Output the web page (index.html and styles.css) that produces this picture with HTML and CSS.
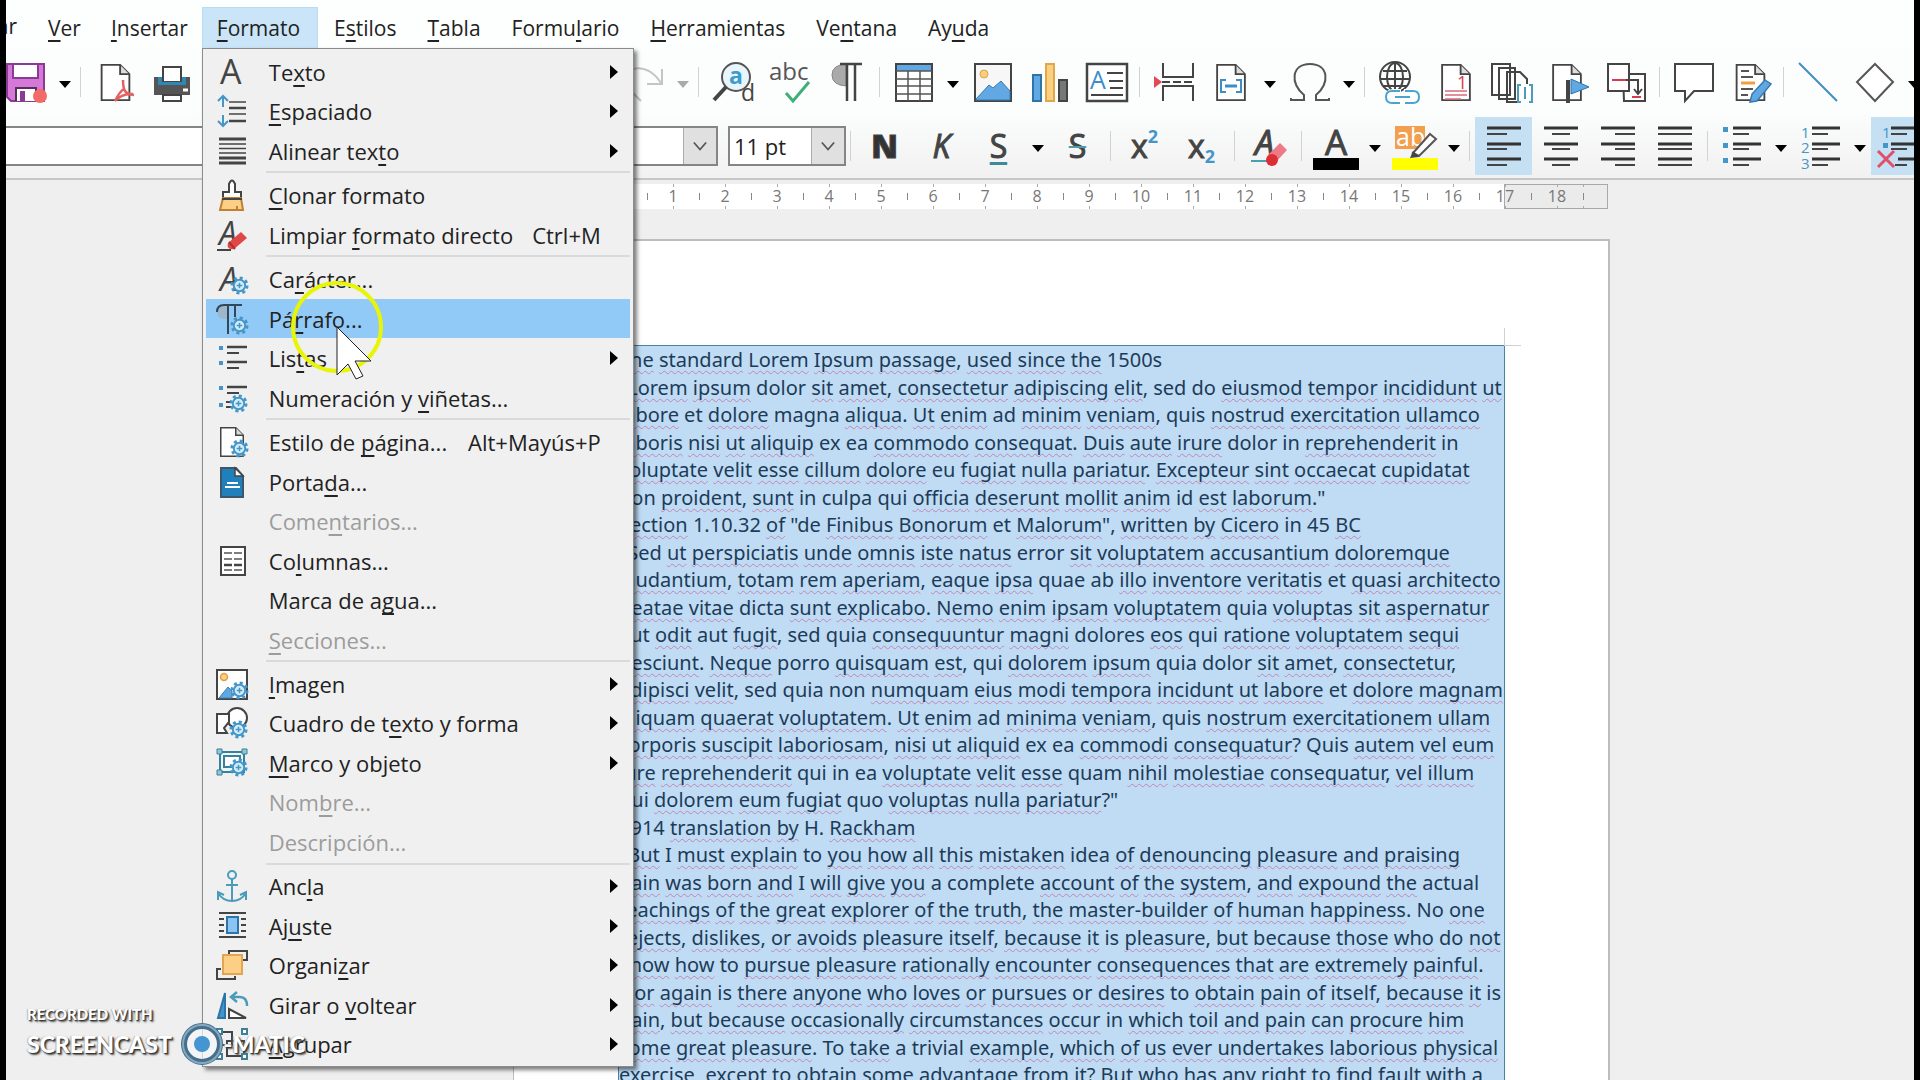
FILE: index.html
```html
<!DOCTYPE html>
<html lang="es">
<head>
<meta charset="utf-8">
<title>Writer - Formato</title>
<link rel="stylesheet" href="styles.css">
</head>
<body>
<svg class="sprite" aria-hidden="true">
  <symbol id="gear" viewBox="0 0 20 20">
    <circle cx="10" cy="10" r="8" fill="none" stroke="#4596c8" stroke-width="3" stroke-dasharray="3.2 3.08"/>
    <circle cx="10" cy="10" r="6" fill="#d5edf7" stroke="#4596c8" stroke-width="2"/>
    <path d="M10 7v6M7 10h6" stroke="#4596c8" stroke-width="1.6"/>
  </symbol>
  <symbol id="page" viewBox="0 0 32 40">
    <path d="M1 1h20l10 10v28H1z" fill="#fff" stroke="#444" stroke-width="2"/>
    <path d="M21 1v10h10" fill="#ddd" stroke="#444" stroke-width="2"/>
  </symbol>
</svg>

<div class="app">
  <nav class="menubar">
    <button class="top first">Editar</button>
    <button class="top"><u>V</u>er</button>
    <button class="top"><u>I</u>nsertar</button>
    <div class="holder">
      <button class="top open"><u>F</u>ormato</button>
      <div class="menu" role="menu">
        <button class="item"><svg viewBox="0 0 32 32"><text x="4" y="28" class="glyph" font-size="34">A</text></svg><span>Te<u>x</u>to</span><i></i></button>
        <button class="item"><svg viewBox="0 0 32 32" fill="none"><path d="M7 12V2M2 6l5-5 5 5M7 20v10M2 26l5 5 5-5" stroke="#4596c8" stroke-width="2"/><path d="M13 7h17M13 19h17" stroke="#444" stroke-width="1.5"/><path d="M13 13h17M13 26h17" stroke="#444" stroke-width="2.6"/></svg><span><u>E</u>spaciado</span><i></i></button>
        <button class="item"><svg viewBox="0 0 32 32" fill="none" stroke="#444"><path d="M3 4h27M3 23h27M3 28h27" stroke-width="3"/><path d="M3 9h27M3 13.500h27M3 18h27" stroke-width="1.500"/></svg><span>Alinear tex<u>t</u>o</span><i></i></button>
        <hr>
        <button class="item"><svg viewBox="0 0 32 32" stroke="#444" stroke-width="2"><path d="M13 13V5q3-7 6 0v8h6v6H7v-6z" fill="#fff"/><path d="M7 19h18l2 12H4z" fill="#fbcf85" stroke="#c08030"/><path d="M6 20h20"/><path d="M21 27v4" stroke="#c08030"/></svg><span><u>C</u>lonar formato</span></button>
        <button class="item"><svg viewBox="0 0 32 32"><text x="3" y="26" class="glyph" font-style="italic" font-size="32">A</text><path d="M1 31h14" stroke="#444" stroke-width="2"/><path d="M12 24l13-11 6 6-13 11q-8 1-6-6z" fill="#e04848"/><path d="M13 23l6 7" stroke="#b02f2f" stroke-width="2"/></svg><span>Limpiar <u>f</u>ormato directo</span><kbd>Ctrl+M</kbd></button>
        <hr>
        <button class="item"><svg viewBox="0 0 32 32"><text x="4" y="28" class="glyph" font-style="italic" font-size="32">A</text><use href="#gear" x="14" y="13" width="19" height="19"/></svg><span>Ca<u>r</u>ácter...</span></button>
        <button class="item hover"><svg viewBox="0 0 32 32"><path d="M12 2v14H8Q1 15 1 9t7-7z" fill="#9db7cc"/><path d="M1 9q0-7 7-7h18M12 2v29M19 2v12" fill="none" stroke="#33475a" stroke-width="2"/><use href="#gear" x="14" y="13" width="19" height="19"/></svg><span>Pá<u>r</u>rafo...</span></button>
        <button class="item"><svg viewBox="0 0 32 32"><path d="M3 4h4v4H3zM3 19h4v4H3z" fill="#4596c8"/><path d="M11 5h20M11 20h20" stroke="#444" stroke-width="2.500"/><path d="M11 11h12M11 26h12" stroke="#444" stroke-width="2"/></svg><span>Lis<u>t</u>as</span><i></i></button>
        <button class="item"><svg viewBox="0 0 32 32"><path d="M3 4h4v4H3zM3 21h4v4H3z" fill="#4596c8"/><path d="M11 5h20" stroke="#444" stroke-width="2.500"/><path d="M11 11h12M10 20h6M10 25h6" stroke="#444" stroke-width="2"/><use href="#gear" x="13" y="12" width="19" height="19"/></svg><span>Numeración y <u>v</u>iñetas...</span></button>
        <hr>
        <button class="item"><svg viewBox="0 0 32 32"><use href="#page" x="4" y="1" width="24" height="30"/><use href="#gear" x="14" y="13" width="19" height="19"/></svg><span>Estilo de <u>p</u>ágina...</span><kbd>Alt+Mayús+P</kbd></button>
        <button class="item"><svg viewBox="0 0 32 32"><path d="M5 2h15l7 8v21H5z" fill="#2080bb" stroke="#3c566a" stroke-width="2"/><path d="M19 2v8h8z" fill="#fff" stroke="#444" stroke-width="1.500"/><path d="M11 17h11M9 21h15" stroke="#fff" stroke-width="2"/></svg><span>Porta<u>d</u>a...</span></button>
        <button class="item" disabled><svg viewBox="0 0 32 32"></svg><span>Come<u>n</u>tarios...</span></button>
        <button class="item"><svg viewBox="0 0 32 32"><path d="M5 2h24v28H5z" fill="#fff" stroke="#444" stroke-width="2"/><path d="M8 8h8M18 8h8M8 14h8M18 14h8M8 25h8M18 25h8" stroke="#555" stroke-width="1.500"/><path d="M8 20h8M18 20h8" stroke="#444" stroke-width="2.500"/></svg><span>Co<u>l</u>umnas...</span></button>
        <button class="item"><svg viewBox="0 0 32 32"></svg><span>Marca de a<u>g</u>ua...</span></button>
        <button class="item" disabled><svg viewBox="0 0 32 32"></svg><span><u>S</u>ecciones...</span></button>
        <hr>
        <button class="item"><svg viewBox="0 0 32 32"><path d="M1 2h30v29H1z" fill="#fff" stroke="#444" stroke-width="2"/><circle cx="8" cy="9" r="3.500" fill="#fbcf85" stroke="#e0a040" stroke-width="1.500"/><path d="M3 30l9-11 4 4v7z" fill="#5fa8df" stroke="#3b80b8"/><use href="#gear" x="14" y="13" width="19" height="19"/></svg><span><u>I</u>magen</span><i></i></button>
        <button class="item"><svg viewBox="0 0 32 32" fill="#fff" stroke="#444" stroke-width="2"><circle cx="21" cy="11" r="10"/><path d="M1 7h12v8l-5 6 3 5H1z"/><use href="#gear" x="13" y="13" width="19" height="19"/></svg><span>Cuadro de t<u>e</u>xto y forma</span><i></i></button>
        <button class="item"><svg viewBox="0 0 32 32" fill="#e9f6fa" stroke="#3c7f98" stroke-width="2"><path d="M4 5h24v20H4z"/><path d="M8 9h16v11H8z" fill="#fff"/><path d="M1 2h5v5H1zM26 2h5v5h-5zM1 23h5v5H1z" fill="#8dc8dc" stroke-width="1"/><use href="#gear" x="13" y="11" width="19" height="19"/></svg><span><u>M</u>arco y objeto</span><i></i></button>
        <button class="item" disabled><svg viewBox="0 0 32 32"></svg><span>Nom<u>b</u>re...</span></button>
        <button class="item" disabled><svg viewBox="0 0 32 32"></svg><span>Descripción...</span></button>
        <hr>
        <button class="item"><svg viewBox="0 0 32 32" fill="none" stroke="#4a9cb8" stroke-width="2"><circle cx="16" cy="5" r="4"/><path d="M16 9v22M10 15h12M2 30v-8l6 3M2 23q5 8 14 8t14-8M30 30v-8l-6 3"/></svg><span>Anc<u>l</u>a</span><i></i></button>
        <button class="item"><svg viewBox="0 0 32 32" stroke="#444" stroke-width="2"><path d="M3 3h27M3 27h27"/><path d="M3 9h5M3 15h5M3 21h5M25 9h5M25 15h5M25 21h5"/><path d="M11 7h11v16H11z" fill="#8cc4f4" stroke="#2d74a8"/></svg><span>Aj<u>u</u>ste</span><i></i></button>
        <button class="item"><svg viewBox="0 0 32 32"><path d="M13 5V2h18v9h-5M5 20H1v10h18v-3" fill="none" stroke="#444" stroke-width="2"/><path d="M7 6h19v19H7z" fill="#fbcf85" stroke="#e3a650" stroke-width="2"/></svg><span>Organi<u>z</u>ar</span><i></i></button>
        <button class="item"><svg viewBox="0 0 32 32"><path d="M9 4v25H2z" fill="#4596c8" stroke="#2d74a8" stroke-width="2"/><path d="M13 20v9h17z" fill="#fff" stroke="#444" stroke-width="2"/><path d="M21 3l-6 5 6 5M15 8h9q7 0 7 9" fill="none" stroke="#4a9cb8" stroke-width="2.500"/></svg><span>Girar o <u>v</u>oltear</span><i></i></button>
        <button class="item"><svg viewBox="0 0 32 32" fill="none" stroke="#444" stroke-width="2"><path d="M4 4h12v13H4zM11 13h17v15H11z"/><path d="M1 1h5v5H1zM26 1h5v5h-5zM26 26h5v5h-5zM1 26h5v5H1z" fill="#fff" stroke="#3c7f98"/></svg><span><u>A</u>grupar</span><i></i></button>
      </div>
    </div>
    <button class="top">E<u>s</u>tilos</button>
    <button class="top"><u>T</u>abla</button>
    <button class="top">Formu<u>l</u>ario</button>
    <button class="top"><u>H</u>erramientas</button>
    <button class="top">Ve<u>n</u>tana</button>
    <button class="top">Ay<u>u</u>da</button>
  </nav>

  <div class="toolbar standard">
    <div class="group left">
      <button class="tool" aria-label="Guardar"><svg viewBox="0 0 40 40"><path d="M1 2h37v37H5l-4-4z" fill="#d678d8" stroke="#8a3c94" stroke-width="2"/><path d="M7 2h25v14H7z" fill="#fff" stroke="#8a3c94" stroke-width="2"/><path d="M10 39V26h20v13" fill="#fff" stroke="#55305c" stroke-width="2"/><path d="M14 29h5v10h-5z" fill="#8a3c94"/><circle cx="34" cy="34" r="7" fill="#f26b66"/></svg></button>
      <button class="drop" aria-label="Más"></button><b class="sep"></b>
      <button class="tool" aria-label="PDF"><svg viewBox="0 0 40 40"><use href="#page" x="5" y="2" width="31" height="37"/><path d="M28 18c0 12 3 14 11 15M29 27c-4 2-6 6-9 12q7-8 18-7" fill="none" stroke="#e3625f" stroke-width="2.500"/></svg></button>
      <button class="tool" aria-label="Imprimir"><svg viewBox="0 0 40 40"><path d="M11 5h18v15H11z" fill="#fff" stroke="#444" stroke-width="2"/><path d="M2 15h8v8h20v-8h8v18H2z" fill="#555"/><path d="M6 15h4v5h20v-5h4v8H6z" fill="#2f87b4"/><path d="M11 33h18v6H11z" fill="#fff" stroke="#444" stroke-width="2"/><path d="M31 28h5" stroke="#fff" stroke-width="3"/></svg></button>
    </div>
    <div class="group">
      <button class="tool" aria-label="Rehacer"><svg viewBox="0 0 40 40" fill="none" stroke="#c4c4c4" stroke-width="2"><path d="M17 39L2 24C-2 4 22-2 37 21M38 7v15H23"/></svg></button>
      <button class="drop dim" aria-label="Más"></button><b class="sep"></b>
      <button class="tool" aria-label="Buscar"><svg viewBox="0 0 40 40"><circle cx="23" cy="15" r="14" fill="#e8f5fb" stroke="#555" stroke-width="2"/><path d="M13 25L1 38" stroke="#444" stroke-width="4"/><text x="16" y="22" font-size="23" font-weight="700" fill="#3c9ccf">a</text><text x="28" y="39" font-size="23" fill="#444">d</text></svg></button>
      <button class="tool" aria-label="Ortografía"><svg viewBox="0 0 40 40"><text x="-1" y="18" font-size="24" fill="#555">abc</text><path d="M16 31l7 8 16-19" fill="none" stroke="#3fae78" stroke-width="3"/></svg></button>
      <button class="tool" aria-label="Marcas"><svg viewBox="0 0 40 40"><path d="M19 2v22Q5 23 5 13T19 2z" fill="#aaa" stroke="#888"/><path d="M13 2h22M20 2v37M28 2v37" stroke="#444" stroke-width="2.500"/></svg></button>
      <b class="sep"></b>
      <button class="tool" aria-label="Tabla"><svg viewBox="0 0 40 40"><path d="M2 2h36v37H2z" fill="#fff" stroke="#444" stroke-width="2"/><path d="M3 3h34v6H3z" fill="#5fa8e4"/><path d="M2 9h36M2 17h36M2 24h36M2 32h36M14 9v30M26 9v30" stroke="#555" stroke-width="1.500"/></svg></button>
      <button class="drop" aria-label="Más"></button>
      <button class="tool" aria-label="Imagen"><svg viewBox="0 0 40 40"><path d="M2 2h36v37H2z" fill="#f7f7f7" stroke="#444" stroke-width="2"/><circle cx="11" cy="12" r="4" fill="#fbcf85" stroke="#e0a040"/><path d="M3 37l13-14 4 3 8-7 9 10v9H3z" fill="#62a8e2" stroke="#347db4"/></svg></button>
      <button class="tool" aria-label="Gráfico"><svg viewBox="0 0 40 40" stroke-width="2"><path d="M3 13h8v26H3z" fill="#62a8e2" stroke="#2d74a8"/><path d="M16 2h8v37h-8z" fill="#fbd080" stroke="#dfa84c"/><path d="M29 18h8v21h-8z" fill="#777" stroke="#444"/></svg></button>
      <button class="tool" aria-label="Cuadro de texto"><svg viewBox="0 0 40 40"><path d="M0 2h40v37H0z" fill="#fff" stroke="#444" stroke-width="2.500"/><text x="3" y="27" font-size="25" fill="#3c8dc8">A</text><path d="M20 11h16M22 19h14M23 26h13M4 33h32" stroke="#444" stroke-width="2"/></svg></button>
      <b class="sep"></b>
      <button class="tool" aria-label="Salto"><svg viewBox="0 0 40 40" fill="none" stroke="#444" stroke-width="2"><path d="M9 1v14h30V1M9 39V24h30v15"/><path d="M8 20h32" stroke-dasharray="8 3"/><path d="M0 14l8 6-8 6z" fill="#e14a55" stroke="none"/></svg></button>
      <button class="tool" aria-label="Campo"><svg viewBox="0 0 40 40"><use href="#page" x="5" y="2" width="30" height="37"/><path d="M15 18h-5v12h5M25 18h5v12h-5" fill="none" stroke="#3c8dc8" stroke-width="2"/><path d="M14 24h12" stroke="#3c8dc8" stroke-width="3"/></svg></button>
      <button class="drop" aria-label="Más"></button>
      <button class="tool" aria-label="Carácter especial"><svg viewBox="0 0 40 40" fill="none" stroke="#555" stroke-width="2"><path d="M1 36v2h13v-5C0 22 1 2 20 2s20 20 6 31v5h13v-2"/></svg></button>
      <button class="drop" aria-label="Más"></button><b class="sep"></b>
      <button class="tool" aria-label="Hiperenlace"><svg viewBox="0 0 40 40" fill="none" stroke="#444" stroke-width="2"><circle cx="16" cy="15" r="15"/><ellipse cx="16" cy="15" rx="8" ry="14"/><path d="M1 17h30M4 9h24M4 24h24M16 1v28"/><path d="M22 29h-8q-6 0-6 6t6 6h8M25 29h8q6 0 6 6t-6 6h-8M16 35h15" stroke="#fff" stroke-width="4"/><path d="M21 29h-8q-6 0-6 6t6 6h8M26 29h8q6 0 6 6t-6 6h-8M16 35h15" stroke="#49a5cf"/></svg></button>
      <button class="tool" aria-label="Nota al pie"><svg viewBox="0 0 40 40"><use href="#page" x="5" y="2" width="30" height="37"/><text x="21" y="27" font-size="18" fill="#d33c4e">1</text><path d="M9 29h22M9 33h22M9 37h16" stroke="#d66c78" stroke-width="1.500"/></svg></button>
      <button class="tool" aria-label="Nota final"><svg viewBox="0 0 40 40" fill="#fff" stroke="#444" stroke-width="2"><path d="M-1 2h18v31H-1zM6 6h16v31H6zM14 10h13l7 7v23H14z"/><path d="M24 22h16v19H24z" stroke="none"/><path d="M28 23h-3v17h3M36 23h3v17h-3M32 25v12" stroke="#4a9cb8"/></svg></button>
      <button class="tool" aria-label="Marcador"><svg viewBox="0 0 40 40"><use href="#page" x="2" y="2" width="30" height="37"/><path d="M18 18v23" stroke="#444" stroke-width="4"/><path d="M21 17l18 8-18 7z" fill="#5fa8e4" stroke="#2d74a8"/></svg></button>
      <button class="tool" aria-label="Referencia"><svg viewBox="0 0 40 40" fill="#fff" stroke="#444" stroke-width="2"><path d="M16 12h22v27H17z"/><path d="M1 2h21v27H1z"/><path d="M19 18h12v13M27 27l4 5 4-5" fill="none"/><path d="M5 18h14M25 35h9" stroke="#d33c4e"/></svg></button>
      <b class="sep"></b>
      <button class="tool" aria-label="Comentario"><svg viewBox="0 0 40 40" fill="#fff" stroke="#444" stroke-width="2"><path d="M1 2h38v27H20l-9 10V29H1z"/></svg></button>
      <button class="tool" aria-label="Cambios"><svg viewBox="0 0 40 40"><use href="#page" x="4" y="2" width="31" height="37"/><path d="M10 9h8M10 15h12M10 27h12M10 33h7" stroke="#555" stroke-width="2"/><path d="M10 21h14" stroke="#f0a040" stroke-width="3"/><path d="M34 18l6 4-14 17-7 1 2-8z" fill="#5fa8e4" stroke="#3a78b0" stroke-width="1.500"/></svg></button>
      <b class="sep"></b>
      <button class="tool" aria-label="Línea"><svg viewBox="0 0 40 40"><path d="M1 1l38 38" stroke="#3c8dc0" stroke-width="2"/></svg></button>
      <button class="tool" aria-label="Formas"><svg viewBox="0 0 40 40"><path d="M20 2l18 18-18 19L2 20z" fill="#fff" stroke="#555" stroke-width="2"/></svg></button>
      <button class="drop" aria-label="Más"></button>
    </div>
  </div>

  <div class="toolbar format">
    <div class="combo style"><input aria-label="Estilo de párrafo"></div>
    <div class="combo font"><select aria-label="Fuente"><option></option></select><svg viewBox="0 0 16 16"><path d="M1 4l7 8 7-8"/></svg></div>
    <div class="combo size"><select aria-label="Tamaño"><option>11 pt</option></select><svg viewBox="0 0 16 16"><path d="M1 4l7 8 7-8"/></svg></div>
    <b class="sep"></b>
    <button class="tool letter bold">N</button>
    <button class="tool letter ital">K</button>
    <button class="tool letter under">S</button>
    <button class="drop" aria-label="Más"></button>
    <button class="tool letter strike">S</button>
    <b class="sep"></b>
    <button class="tool letter">x<sup>2</sup></button>
    <button class="tool letter">x<sub>2</sub></button>
    <b class="sep"></b>
    <button class="tool" aria-label="Limpiar"><svg viewBox="0 0 40 40"><text x="6" y="29" class="glyph" font-style="italic" font-size="34">A</text><path d="M2 35h16" stroke="#49a0b0" stroke-width="2"/><path d="M19 29l12-12 7 7-11 12z" fill="#ee7a86"/><circle cx="23" cy="34" r="6" fill="#dc2f35"/></svg></button>
    <b class="sep"></b>
    <button class="tool" aria-label="Color de letra"><svg class="wide" viewBox="0 0 46 46"><text x="12" y="32" class="glyph" font-size="35">A</text><path d="M0 35h46v12H0z"/></svg></button>
    <button class="drop" aria-label="Más"></button>
    <button class="tool" aria-label="Color de resalte"><svg class="wide" viewBox="0 0 46 46"><path d="M3 3h30v23H3z" fill="#f3a04e"/><text x="4" y="23" font-size="25" fill="#fff">ab</text><path d="M0 35h46v12H0z" fill="#ff0"/><path d="M38 11l6 5-17 17-6-3z" fill="#fff" stroke="#555" stroke-width="2"/><path d="M21 28l6 6-9 1z" fill="#444"/></svg></button>
    <button class="drop" aria-label="Más"></button>
    <b class="sep"></b>
    <button class="tool on" aria-label="Izquierda"><svg viewBox="0 0 40 40"><path class="k" d="M3 2h34M3 18h34M3 33h34"/><path class="n" d="M3 8h20M3 23h20M3 39h20"/></svg></button>
    <button class="tool" aria-label="Centro"><svg viewBox="0 0 40 40"><path class="k" d="M3 2h34M3 18h34M3 33h34"/><path class="n" d="M11 8h18M11 23h18M11 39h18"/></svg></button>
    <button class="tool" aria-label="Derecha"><svg viewBox="0 0 40 40"><path class="k" d="M3 2h34M3 18h34M3 33h34"/><path class="n" d="M17 8h20M17 23h20M17 39h20"/></svg></button>
    <button class="tool" aria-label="Justificado"><svg viewBox="0 0 40 40"><path class="k" d="M3 2h34M3 18h34M3 33h34"/><path class="n" d="M3 8h34M3 23h34M3 39h34"/></svg></button>
    <b class="sep"></b>
    <button class="tool" aria-label="Viñetas"><svg viewBox="0 0 40 40"><path d="M1 1h5v5H1zM1 17h5v5H1zM1 32h5v5H1z" fill="#4596c8"/><path class="k" d="M11 2h28M11 18h28M11 33h28"/><path class="n" d="M11 8h16M11 23h16M11 39h16"/></svg></button>
    <button class="drop" aria-label="Más"></button>
    <button class="tool" aria-label="Numeración"><svg viewBox="0 0 40 40"><g font-size="15" fill="#4596c8"><text x="0" y="12">1</text><text x="0" y="27">2</text><text x="0" y="43">3</text></g><path class="k" d="M11 2h28M11 18h28M11 33h28"/><path class="n" d="M11 8h16M11 23h16M11 39h16"/></svg></button>
    <button class="drop" aria-label="Más"></button>
    <button class="tool on" aria-label="Sin lista"><svg viewBox="0 0 40 40"><text x="2" y="12" font-size="15" fill="#4596c8">1</text><path d="M3 17h5v5H3z" fill="#4596c8"/><path class="k" d="M11 2h28M11 18h28M18 33h21"/><path class="n" d="M11 8h16M11 23h16M15 39h12"/><path d="M-2 25l16 16M14 25L-2 41" stroke="#e0506a" stroke-width="3"/></svg></button>
  </div>

  <main class="workspace">
    <div class="ruler">
      <span>1</span><span>2</span><span>3</span><span>4</span><span>5</span><span>6</span><span>7</span><span>8</span><span>9</span><span>10</span><span>11</span><span>12</span><span>13</span><span>14</span><span>15</span><span>16</span><span>17</span><span>18</span><span class="tail"></span>
    </div>
    <article class="page">
      <div class="selection">
        <p><span>The standard Lorem Ipsum passage, used since the 1500s</span></p>
        <p><span>"Lorem ipsum dolor sit amet, consectetur adipiscing elit, sed do eiusmod tempor incididunt ut</span><span>labore et dolore magna aliqua. Ut enim ad minim veniam, quis nostrud exercitation ullamco</span><span>laboris nisi ut aliquip ex ea commodo consequat. Duis aute irure dolor in reprehenderit in</span><span>voluptate velit esse cillum dolore eu fugiat nulla pariatur. Excepteur sint occaecat cupidatat</span><span>non proident, sunt in culpa qui officia deserunt mollit anim id est laborum."</span></p>
        <p><span>Section 1.10.32 of "de Finibus Bonorum et Malorum", written by Cicero in 45 BC</span></p>
        <p><span>"Sed ut perspiciatis unde omnis iste natus error sit voluptatem accusantium doloremque</span><span>laudantium, totam rem aperiam, eaque ipsa quae ab illo inventore veritatis et quasi architecto</span><span>beatae vitae dicta sunt explicabo. Nemo enim ipsam voluptatem quia voluptas sit aspernatur</span><span>aut odit aut fugit, sed quia consequuntur magni dolores eos qui ratione voluptatem sequi</span><span>nesciunt. Neque porro quisquam est, qui dolorem ipsum quia dolor sit amet, consectetur,</span><span>adipisci velit, sed quia non numquam eius modi tempora incidunt ut labore et dolore magnam</span><span>aliquam quaerat voluptatem. Ut enim ad minima veniam, quis nostrum exercitationem ullam</span><span>corporis suscipit laboriosam, nisi ut aliquid ex ea commodi consequatur? Quis autem vel eum</span><span>iure reprehenderit qui in ea voluptate velit esse quam nihil molestiae consequatur, vel illum</span><span>qui dolorem eum fugiat quo voluptas nulla pariatur?"</span></p>
        <p><span>1914 translation by H. Rackham</span></p>
        <p><span>"But I must explain to you how all this mistaken idea of denouncing pleasure and praising</span><span>pain was born and I will give you a complete account of the system, and expound the actual</span><span>teachings of the great explorer of the truth, the master-builder of human happiness. No one</span><span>rejects, dislikes, or avoids pleasure itself, because it is pleasure, but because those who do not</span><span>know how to pursue pleasure rationally encounter consequences that are extremely painful.</span><span>Nor again is there anyone who loves or pursues or desires to obtain pain of itself, because it is</span><span>pain, but because occasionally circumstances occur in which toil and pain can procure him</span><span>some great pleasure. To take a trivial example, which of us ever undertakes laborious physical</span><span>exercise, except to obtain some advantage from it? But who has any right to find fault with a</span></p>
      </div>
    </article>
  </main>
</div>

<svg class="pointer" viewBox="0 0 96 100" aria-hidden="true">
  <circle cx="48" cy="48" r="44" fill="none" stroke="#e8f508" stroke-width="4"/>
  <path d="M48 48v48l11-11 8 15 7-3-8-15h16z" fill="#fff" stroke="#222" stroke-width="1"/>
</svg>
<div class="watermark">
  <small>RECORDED WITH</small>
  <div>SCREENCAST<svg viewBox="0 0 44 44"><circle cx="22" cy="22" r="18" fill="#f3f6f8" fill-opacity=".7" stroke="#456f8c" stroke-width="6"/><circle cx="22" cy="22" r="19" fill="none" stroke="#86a9bf" stroke-width="2"/><circle cx="22" cy="22" r="8" fill="#4596d0"/></svg>-MATIC</div>
</div>
<script src="script.js"></script>
</body>
</html>
```
FILE: styles.css
```css
* { box-sizing: border-box; }
body {
  margin: 0;
  padding: 0 6px;
  background: #000;
  color: #222;
  font-family: "Open Sans", "Noto Sans", sans-serif;
  font-size: 22px;
  height: 100vh;
  overflow: hidden;
}
button, input, select { font: inherit; color: inherit; border: 0; padding: 0; margin: 0; background: none; }
svg { display: block; overflow: visible; }
.sprite { position: absolute; width: 0; height: 0; }
.glyph { fill: #444; stroke: #444; stroke-width: 1px; font-family: "Open Sans", sans-serif; }

.app { display: flex; flex-direction: column; height: 100vh; background: #efefef; overflow: hidden; }

.menubar { display: flex; align-items: flex-end; height: 49px; background: #fdfefe; padding-bottom: 1px; }
.top { height: 41px; padding: 0 14px 0 16px; white-space: nowrap; font-size: 21px; line-height: 38px; }
.holder ~ .top { padding-right: 15px; }
.top.first { width: 26px; padding: 0 15px 0 0; display: flex; justify-content: flex-end; }
.top u, .item u { text-decoration-thickness: 2px; text-underline-offset: 4px; text-decoration-skip-ink: none; }
.top.open { padding: 0 17px 0 14px; background: #cae5f7; border: 1px solid #b8dcf3; border-bottom: 0; }
.holder { position: relative; }

.menu {
  position: absolute; left: 0; top: 41px; z-index: 2;
  width: 432px; min-height: 1019px;
  display: flex; flex-direction: column;
  padding: 3px 3px 2px;
  background: #f0f0f0; border: 1px solid #8c8c8c;
  box-shadow: 3px 3px 4px rgba(0, 0, 0, .5);
}
.item { flex: 1 0 39px; display: flex; align-items: center; padding: 0 12px 0 10px; text-align: left; white-space: nowrap; }
.item svg { width: 32px; height: 32px; margin-right: 21px; flex: none; }
.item .glyph { stroke-width: 0; }
.item span { flex: 1; }
.item kbd { font: inherit; margin-right: 17px; }
.item i { border: 7px solid transparent; border-left: 8px solid #000; border-right: 0; }
.item:disabled { color: #9c9c9c; }
.hover { background: #91c9f7; }
.menu hr { width: 364px; height: 2px; margin: 1px 0 2px auto; border: 0; background: #d9dadb; flex: none; }

.toolbar { display: flex; align-items: center; background: #fcfdfd; flex: none; }
.standard { height: 66px; justify-content: flex-start; }
.group { display: flex; align-items: center; flex: none; }
.left { width: 609px; margin-left: -9px; margin-right: 9px; }
.tool { width: 57px; height: 58px; display: flex; align-items: center; justify-content: center; flex: none; }
.tool svg { width: 40px; height: 40px; }
.tool .wide { width: 46px; height: 46px; }
.tool .k { stroke: #333; stroke-width: 3px; }
.tool .n { stroke: #444; stroke-width: 2px; }
.on { background: #c5dff3; }
.drop { width: 22px; height: 40px; display: flex; align-items: center; justify-content: center; flex: none; }
.drop::after { content: ""; border: 6px solid transparent; border-top: 7px solid #000; border-bottom: 0; margin-top: 4px; }
.dim::after { border-top-color: #aaa; }
.sep { width: 1px; height: 30px; margin: 0 5px 0 4px; background: #d2d2d2; flex: none; }

.format { height: 65px; padding-bottom: 1px; background: linear-gradient(#fbfcfc, #f1f1f2); border-bottom: 2px solid #c6c6c6; }
.combo { display: flex; align-items: center; height: 40px; border: 2px solid #858585; background: #fff; flex: none; }
.style { width: 396px; border-left: 0; }
.style input { width: 100%; }
.font { width: 304px; margin: 0 10px 0 12px; }
.size { width: 118px; }
.combo select { flex: 1; min-width: 0; appearance: none; padding-left: 4px; }
.combo svg { width: 33px; height: 36px; padding: 10px 9px; background: #e0e0e0; border-left: 1px solid #aaa; fill: none; stroke: #555; stroke-width: 2px; }
.letter { color: #444; font-size: 32px; -webkit-text-stroke: 1px #444; line-height: 40px; }
.bold { font-weight: 800; color: #333; }
.ital { font-style: italic; }
.under { text-decoration: underline #3d8a98 3px; text-underline-offset: 4px; text-decoration-skip-ink: none; }
.strike { text-decoration: line-through #4e9cab 2px; }
.letter sup, .letter sub { font-size: 18px; line-height: 20px; color: #4596c8; font-weight: 700; -webkit-text-stroke: 0; }
.letter sup { margin-bottom: 20px; }
.letter sub { margin-top: 20px; }

.workspace { flex: 1; min-height: 0; padding: 4px 0 0 507px; overflow: hidden; }
.ruler { display: flex; width: 1095px; height: 25px; padding-left: 134px; background: linear-gradient(90deg, #fff 992px, #ebebeb 992px); position: relative; }
.ruler::after { content: ""; position: absolute; left: 991px; right: 0; top: 0; bottom: 0; border: 1px solid #a8a8a8; }
.ruler span {
  width: 52px; flex: none; text-align: center; color: #777; font-size: 16px; line-height: 25px;
  background:
    linear-gradient(#888, #888) 0 center / 1px 7px no-repeat,
    linear-gradient(#aaa, #aaa) center top / 1px 3px no-repeat,
    linear-gradient(#aaa, #aaa) center bottom / 1px 3px no-repeat;
}
.ruler .tail { width: 1px; }
.page {
  position: relative; width: 1097px; min-height: 1400px; margin-top: 30px; padding: 104px;
  background: #fff; border: 1px solid #bdbdbd; border-top-width: 2px; border-right-width: 2px;
}
.page::before, .page::after { content: ""; position: absolute; background: #d0d0d0; }
.page::before { right: 103px; top: 87px; width: 1px; height: 17px; }
.page::after { right: 87px; top: 104px; width: 17px; height: 1px; }
.selection {
  display: flex; flex-direction: column; min-height: 745px; width: 887px;
  background: #bfdcf4; border: 1px solid #4286a4; color: #1d3b58;
  font-family: "Noto Sans", "Open Sans", sans-serif; font-size: 20px;
}
.selection p { display: contents; }
.selection span { flex: 1 0 27px; line-height: 27px; white-space: nowrap; }
.selection u { text-decoration: underline wavy #c285b4 1px; text-underline-offset: 3px; text-decoration-skip-ink: none; }

.pointer { position: absolute; left: 289px; top: 279px; z-index: 3; width: 96px; height: 100px; }
.watermark {
  position: absolute; left: 27px; bottom: 14px; z-index: 4; color: #fff;
  font-family: Lato, sans-serif; font-weight: 900; font-size: 23px; line-height: 44px;
  text-shadow: 1px 1px 1px #333, 2px 2px 2px #555, -1px 0 1px #bbb;
}
.watermark small { display: block; font-size: 15px; line-height: 16px; }
.watermark div { display: flex; align-items: center; }
.watermark svg { width: 44px; height: 44px; margin: 0 0 0 8px; }
```
FILE: script.js
```js
// Spell checker: every word missing from the dictionary gets a wavy line.
const known = new Set(("dolor sed do et magna ad quis ex ea in eu qui non culpa id de error quae ab dicta quia " +
  "dolores aut porro quo quam a i h to idea complete actual trivial is no me").split(" "));

for (const line of document.querySelectorAll(".selection span")) {
  line.innerHTML = line.textContent.replace(/[A-Za-z][A-Za-z-]*/g, (word, at, all) =>
    known.has(word.toLowerCase()) || /\d/.test(all[at - 1] || "") ? word : `<u>${word}</u>`);
}
```
